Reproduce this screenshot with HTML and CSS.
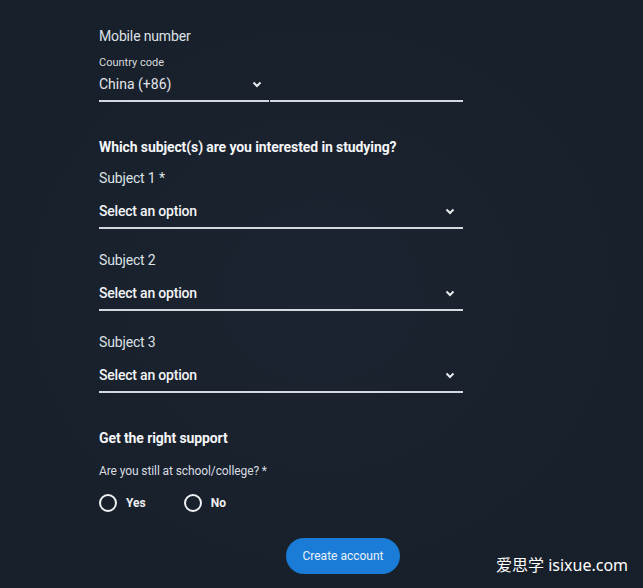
FILE: index.html
```html
<!DOCTYPE html>
<html lang="en">
<head>
<meta charset="utf-8">
<title>Create account</title>
<link rel="stylesheet" href="styles.css">
</head>
<body>
<main class="form">
  <section class="mobile">
    <div class="label-lg">Mobile number</div>
    <div class="phone-row">
      <div class="field country">
        <div class="label-sm">Country code</div>
        <div class="select-row">
          <span class="value">China (+86)</span>
          <svg class="chev" width="10" height="7" viewBox="0 0 10 7"><path d="M1.5 1.5 L5 5 L8.5 1.5" fill="none" stroke="#e8ebee" stroke-width="2"/></svg>
        </div>
      </div>
      <div class="field number"></div>
    </div>
  </section>

  <h2 class="heading">Which subject(s) are you interested in studying?</h2>

  <div class="subject first">
    <div class="label-lg">Subject 1 *</div>
    <div class="select-row bordered">
      <span class="value strong">Select an option</span>
      <svg class="chev" width="10" height="7" viewBox="0 0 10 7"><path d="M1.5 1.5 L5 5 L8.5 1.5" fill="none" stroke="#e8ebee" stroke-width="2"/></svg>
    </div>
  </div>
  <div class="subject">
    <div class="label-lg">Subject 2</div>
    <div class="select-row bordered">
      <span class="value strong">Select an option</span>
      <svg class="chev" width="10" height="7" viewBox="0 0 10 7"><path d="M1.5 1.5 L5 5 L8.5 1.5" fill="none" stroke="#e8ebee" stroke-width="2"/></svg>
    </div>
  </div>
  <div class="subject">
    <div class="label-lg">Subject 3</div>
    <div class="select-row bordered">
      <span class="value strong">Select an option</span>
      <svg class="chev" width="10" height="7" viewBox="0 0 10 7"><path d="M1.5 1.5 L5 5 L8.5 1.5" fill="none" stroke="#e8ebee" stroke-width="2"/></svg>
    </div>
  </div>

  <h2 class="heading support">Get the right support</h2>
  <div class="question">Are you still at school/college? *</div>
  <div class="radios">
    <label class="radio"><span class="circle"></span><span class="radio-text">Yes</span></label>
    <label class="radio"><span class="circle"></span><span class="radio-text">No</span></label>
  </div>

  <button class="create">Create account</button>
</main>
<div class="watermark">爱思学 isixue.com</div>
</body>
</html>
```

FILE: styles.css
```css
html, body {
  margin: 0;
  padding: 0;
}
body {
  width: 643px;
  height: 588px;
  overflow: hidden;
  position: relative;
  background: radial-gradient(ellipse 60% 60% at 50% 50%, #1b2430 0%, #19212d 60%, #171f2a 100%);
  font-family: Roboto, "Liberation Sans", Arial, sans-serif;
  color: #dfe3e7;
}
.form {
  width: 364px;
  margin-left: 99px;
  padding-top: 27px;
  display: flex;
  flex-direction: column;
}
.label-lg {
  font-size: 14px;
  line-height: 18px;
  letter-spacing: -0.15px;
  color: #dde1e5;
}
.label-sm {
  font-size: 11px;
  line-height: 14px;
  color: #d6dade;
  margin-top: 11px;
}
.phone-row {
  display: flex;
  gap: 1px;
}
.field {
  border-bottom: 2px solid #d4d9df;
}
.country {
  width: 170px;
}
.number {
  flex: 1;
}
.select-row {
  display: flex;
  align-items: center;
  justify-content: space-between;
  height: 18px;
  margin-top: 5px;
  padding-bottom: 7px;
}
.country .select-row {
  padding-right: 7px;
}
.select-row.bordered {
  margin-top: 15px;
  padding-right: 8px;
  border-bottom: 2px solid #d4d9df;
}
.value {
  font-size: 14px;
  line-height: 18px;
  color: #e3e6ea;
}
.value.strong {
  font-weight: 500;
  letter-spacing: -0.2px;
  color: #f2f4f6;
}
.chev {
  display: block;
}
.heading {
  margin: 37px 0 0;
  font-size: 14px;
  line-height: 17px;
  font-weight: 700;
  letter-spacing: -0.1px;
  color: #f4f5f7;
}
.subject.first {
  margin-top: 13px;
}
.subject {
  margin-top: 22px;
}
.heading.support {
  margin-top: 37px;
}
.question {
  margin-top: 17px;
  font-size: 12px;
  line-height: 15px;
  letter-spacing: -0.1px;
  color: #d8dce0;
}
.radios {
  margin-top: 14px;
  display: flex;
  gap: 38px;
  height: 20px;
}
.radio {
  display: flex;
  align-items: center;
  gap: 9px;
}
.circle {
  width: 14px;
  height: 14px;
  border: 2px solid #eef0f2;
  border-radius: 50%;
}
.radio-text {
  font-size: 12px;
  font-weight: 700;
  color: #eef0f2;
}
.create {
  margin-top: 25px;
  margin-left: 187px;
  width: 114px;
  height: 36px;
  border: none;
  border-radius: 18px;
  background: #1a7cd6;
  color: #e9f2fb;
  font-family: Roboto, "Liberation Sans", Arial, sans-serif;
  font-size: 12px;
  padding: 0;
}
.watermark {
  position: absolute;
  left: 496px;
  top: 554px;
  font-family: "Noto Sans", "Noto Sans CJK SC", sans-serif;
  font-size: 16px;
  line-height: 22px;
  color: #ffffff;
  white-space: nowrap;
}
```
